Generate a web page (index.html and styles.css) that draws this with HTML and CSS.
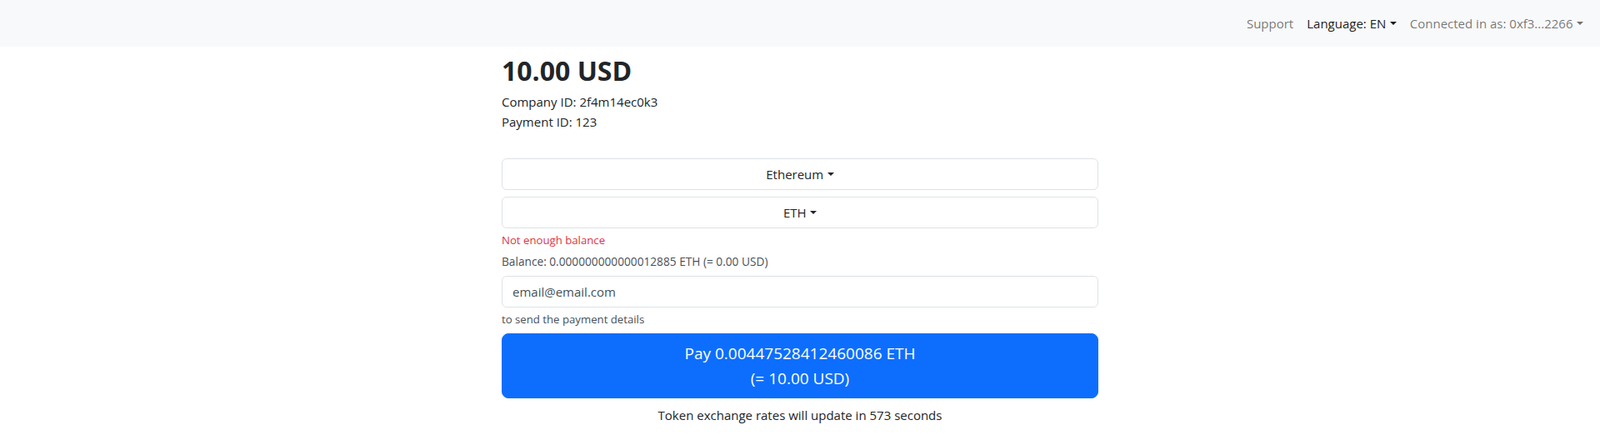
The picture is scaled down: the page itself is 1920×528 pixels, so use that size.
FILE: index.html
```html
<!DOCTYPE html>
<html lang="en">
<head>
<meta charset="utf-8">
<title>Payment</title>
<link rel="stylesheet" href="styles.css">
</head>
<body>
<nav class="navbar">
  <ul class="nav">
    <li><a class="nav-link" href="#">Support</a></li>
    <li><a class="nav-link active dropdown-toggle" href="#">Language: EN</a></li>
    <li><a class="nav-link dropdown-toggle" href="#">Connected in as: 0xf3...2266</a></li>
  </ul>
</nav>
<main class="container">
  <h2 class="amount">10.00 USD</h2>
  <div class="meta">
    <div>Company ID: 2f4m14ec0k3</div>
    <div>Payment ID: 123</div>
  </div>
  <div class="picker"><span class="dropdown-toggle">Ethereum</span></div>
  <div class="picker picker-second"><span class="dropdown-toggle">ETH</span></div>
  <div class="error">Not enough balance</div>
  <div class="balance">Balance: 0.000000000000012885 ETH (= 0.00 USD)</div>
  <input class="email" type="email" placeholder="email@email.com">
  <div class="form-text">to send the payment details</div>
  <button class="pay-btn" type="button">Pay 0.00447528412460086 ETH<br>(= 10.00 USD)</button>
  <div class="rates">Token exchange rates will update in 573 seconds</div>
</main>
</body>
</html>
```
FILE: styles.css
```css
* { box-sizing: border-box; }
body {
  margin: 0;
  font-family: "Segoe UI", "Open Sans", "Noto Sans", sans-serif;
  font-size: 15px;
  line-height: 24px;
  color: #212529;
  background: #fff;
}
.navbar {
  height: 56px;
  background: #f8f9fa;
  display: flex;
  justify-content: flex-end;
  align-items: center;
  padding: 0 12px;
}
.nav {
  display: flex;
  list-style: none;
  margin: 0;
  padding: 0;
}
.nav-link {
  display: block;
  padding: 8px;
  color: rgba(0, 0, 0, 0.55);
  text-decoration: none;
}
.nav-link.active { color: rgba(0, 0, 0, 0.9); }
.dropdown-toggle::after {
  display: inline-block;
  margin-left: 0.3em;
  vertical-align: 0.255em;
  content: "";
  border-top: 0.3em solid;
  border-right: 0.3em solid transparent;
  border-left: 0.3em solid transparent;
  border-bottom: 0;
}
.container {
  width: 716px;
  margin: 0 auto;
  padding-top: 10px;
}
.amount {
  margin: 0 0 6px;
  font-size: 32px;
  font-weight: 700;
  line-height: 38px;
}
.meta { margin-bottom: 32px; }
.picker {
  height: 38px;
  border: 1px solid #dee2e6;
  border-radius: 6px;
  display: flex;
  align-items: center;
  justify-content: center;
}
.picker-second { margin-top: 8px; }
.error {
  margin-top: 4px;
  font-size: 13.2px;
  line-height: 21px;
  color: #dc3545;
}
.balance {
  margin-top: 4px;
  font-size: 13.7px;
  line-height: 21px;
  color: #495057;
}
.email {
  display: block;
  width: 100%;
  height: 38px;
  margin-top: 7px;
  padding: 6px 12px;
  font: inherit;
  color: #212529;
  border: 1px solid #dee2e6;
  border-radius: 6px;
  outline: none;
}
.email::placeholder { color: #495057; opacity: 1; }
.form-text {
  margin-top: 4px;
  font-size: 13.2px;
  line-height: 21px;
  color: #495057;
}
.pay-btn {
  display: block;
  width: 100%;
  margin-top: 6px;
  padding: 8px 16px;
  font: inherit;
  font-size: 19px;
  line-height: 30px;
  color: #fff;
  background: #0d6efd;
  border: 1px solid #0d6efd;
  border-radius: 8px;
}
.rates {
  margin-top: 8px;
  text-align: center;
}
```
